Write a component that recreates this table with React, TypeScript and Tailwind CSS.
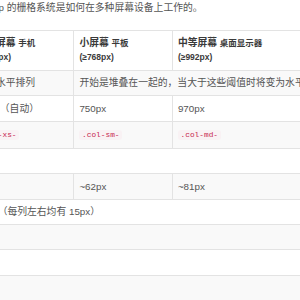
import React from "react";

type Cell = { content: React.ReactNode; span?: number };

const code = (text: string) => (
  <code className="rounded-[3px] bg-[#f9f2f4] px-[2.7px] py-[1.4px] font-['Liberation_Mono',monospace] text-[7.8px] text-[#c7254e]">
    {text}
  </code>
);

const rows: Cell[][] = [
  [
    { content: "栅格系统行为" },
    { content: "总是水平排列" },
    { content: "开始是堆叠在一起的，当大于这些阈值时将变为水平排列", span: 2 },
  ],
  [{ content: ".container 最大宽度" }, { content: "None（自动）" }, { content: "750px" }, { content: "970px" }],
  [{ content: "类前缀" }, { content: code(".col-xs-") }, { content: code(".col-sm-") }, { content: code(".col-md-") }],
  [{ content: "列（column）数" }, { content: "12", span: 3 }],
  [{ content: "最大列（column）宽" }, { content: "自动" }, { content: "~62px" }, { content: "~81px" }],
  [{ content: "槽（gutter）宽" }, { content: "30px（每列左右均有 15px）", span: 3 }],
  [{ content: "可嵌套" }, { content: "是", span: 3 }],
  [{ content: "偏移（Offsets）" }, { content: "是", span: 3 }],
  [{ content: "列排序" }, { content: "是", span: 3 }],
];

const headers = [
  { title: "超小屏幕", device: "手机", size: "(<768px)" },
  { title: "小屏幕", device: "平板", size: "(≥768px)" },
  { title: "中等屏幕", device: "桌面显示器", size: "(≥992px)" },
];

export default function App() {
  return (
    <div className="h-[300px] w-[300px] overflow-hidden bg-white font-['Liberation_Sans','Noto_Sans_CJK_SC',sans-serif] text-[9.8px] leading-[13.6px] text-[#555]">
      <p className="ml-[-38px] mb-[15px] whitespace-nowrap pt-px">
        Bootstrap 的栅格系统是如何在多种屏幕设备上工作的。
      </p>

      <table className="ml-[-150px] w-[481px] table-fixed border-collapse">
        <colgroup>
          <col className="w-[120px]" />
          <col className="w-[103px]" />
          <col className="w-[98.5px]" />
          <col className="w-[160px]" />
        </colgroup>
        <thead>
          <tr>
            <th className="border border-[#e3e3e3] px-[5.4px] py-[5px] align-bottom" />
            {headers.map((h) => (
              <th
                key={h.title}
                className="border border-[#e3e3e3] px-[5.4px] py-[5px] text-left align-bottom font-bold whitespace-nowrap text-[#3a3a3a]"
              >
                {h.title} <small className="text-[8.5px]">{h.device}</small>
                <br />
                <small className="text-[8.5px]">{h.size}</small>
              </th>
            ))}
          </tr>
        </thead>
        <tbody>
          {rows.map((row, i) => (
            <tr key={i} className={i % 2 === 0 ? "bg-[#f9f9f9]" : "bg-white"}>
              {row.map((cell, j) => (
                <td
                  key={j}
                  colSpan={cell.span}
                  className="border border-[#e3e3e3] px-[5.4px] py-[5.4px] whitespace-nowrap"
                >
                  {cell.content}
                </td>
              ))}
            </tr>
          ))}
        </tbody>
      </table>
    </div>
  );
}
